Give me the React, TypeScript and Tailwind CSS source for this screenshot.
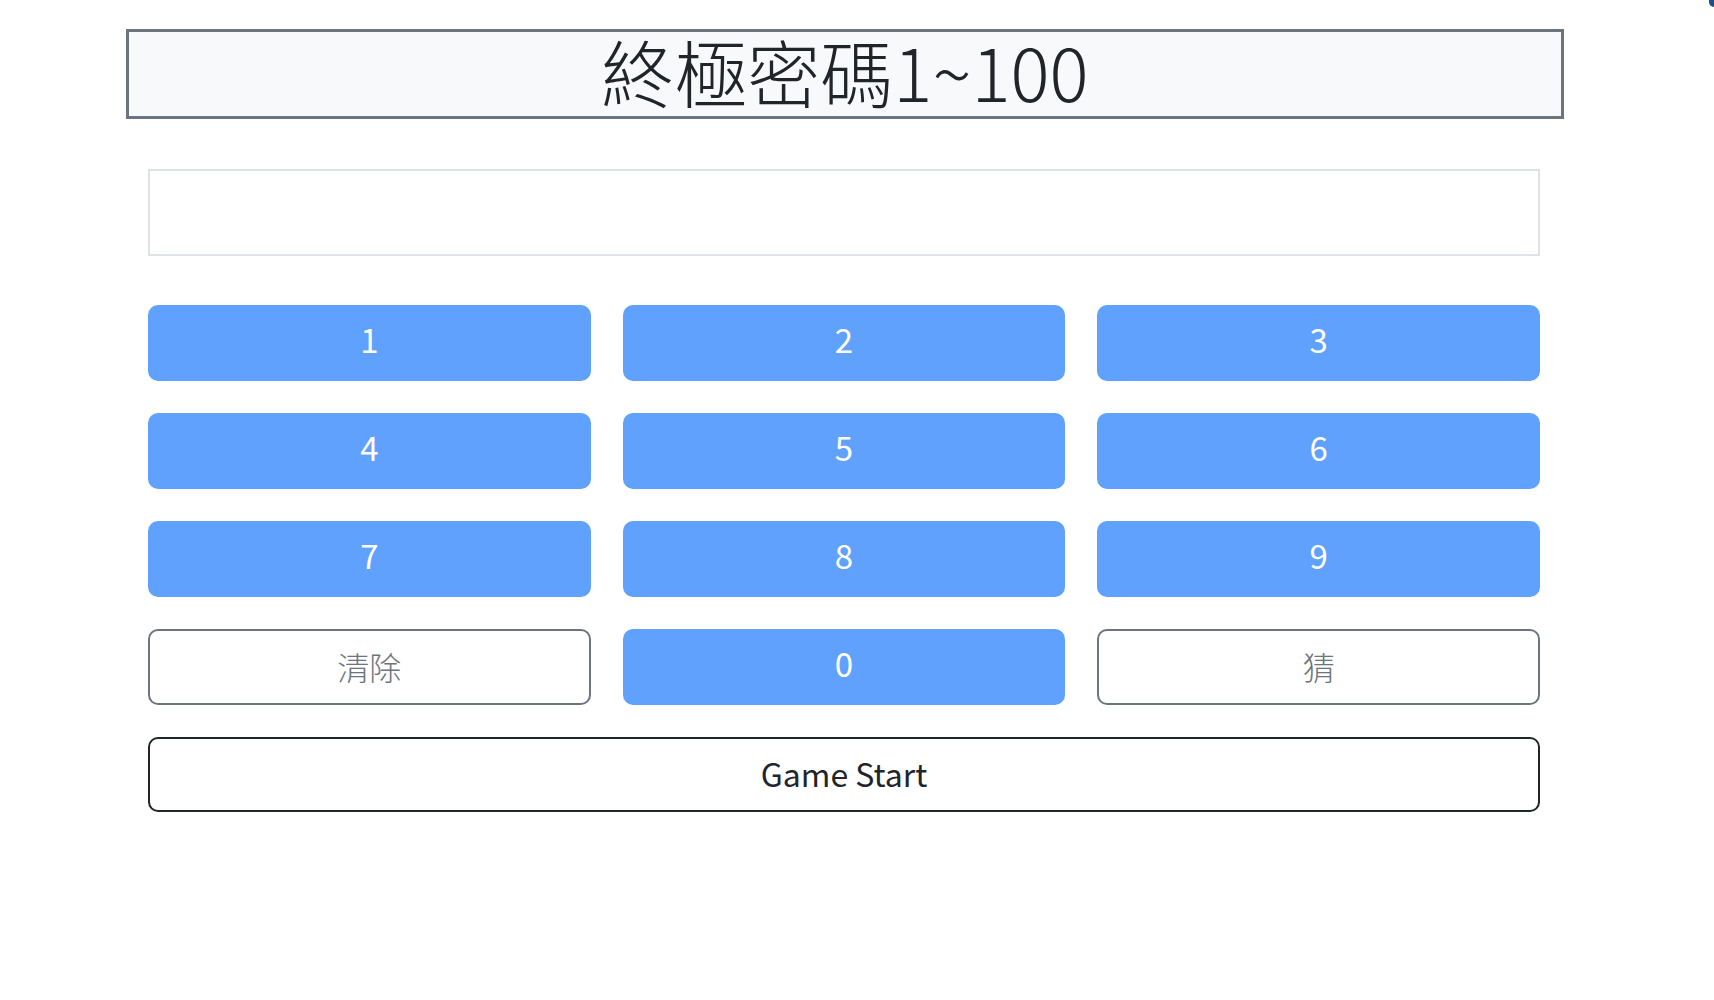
const keys = ['1', '2', '3', '4', '5', '6', '7', '8', '9'];

function KeyButton({ label }: { label: string }) {
  return (
    <button
      type="button"
      className="h-[76px] rounded-[10px] bg-[#60a1fd] pb-[7px] text-[33px] text-white leading-none"
    >
      {label}
    </button>
  );
}

function OutlineButton({ label }: { label: string }) {
  return (
    <button
      type="button"
      className="h-[76px] rounded-[10px] border-2 border-[#6c757d] bg-white pb-[3px] text-[32px] font-light text-[#6c757d] leading-none"
    >
      {label}
    </button>
  );
}

export default function App() {
  return (
    <div
      className="relative min-h-screen w-[1714px] bg-white text-[#212529]"
      style={{ fontFamily: '"Noto Sans CJK TC", "Noto Sans", sans-serif' }}
    >
      <div className="absolute right-0 top-0 h-[7px] w-[5px] rounded-bl-full bg-[#1b5283]" />

      <div className="pt-[29px]">
        <header className="ml-[126px] flex h-[90px] w-[1438px] items-center justify-center border-[3px] border-[#6c757d] bg-[#f8f9fa]">
          <h1 className="pb-[8px] text-[73px] font-light leading-none">終極密碼1~100</h1>
        </header>

        <div className="ml-[148px] mt-[50px] w-[1392px]">
          <input
            type="text"
            className="block h-[87px] w-full border-2 border-[#dee2e6] bg-white px-4 text-[32px] outline-none"
          />

          <div className="mt-[49px] grid grid-cols-3 gap-[32px]">
            {keys.map((k) => (
              <KeyButton key={k} label={k} />
            ))}
            <OutlineButton label="清除" />
            <KeyButton label="0" />
            <OutlineButton label="猜" />
          </div>

          <button
            type="button"
            className="mt-[32px] h-[75px] w-full rounded-[10px] border-2 border-[#212529] bg-white pb-[3px] text-[32px] text-[#212529] leading-none"
          >
            Game Start
          </button>
        </div>
      </div>
    </div>
  );
}
